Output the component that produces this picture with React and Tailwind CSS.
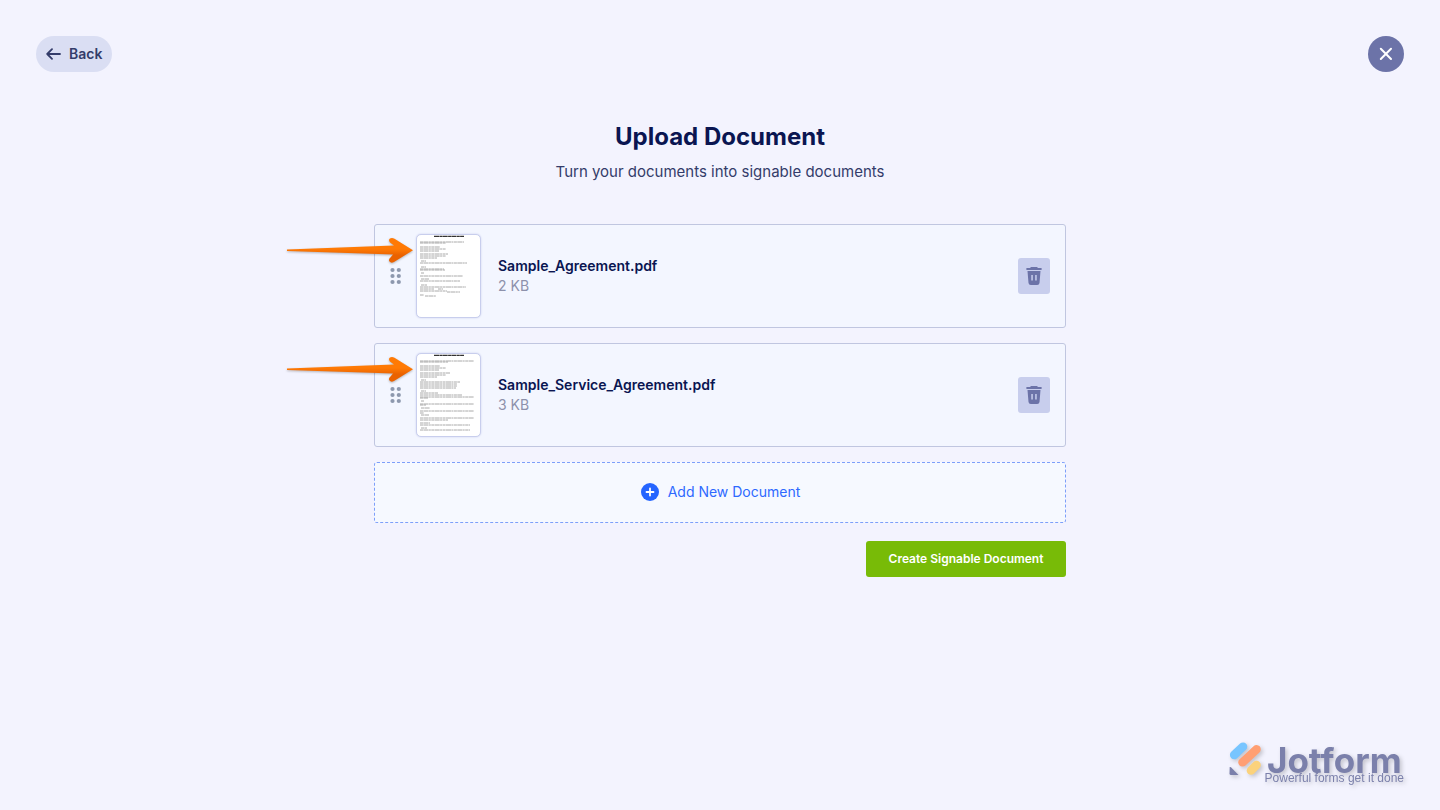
const documents = [
  {
    name: "Sample_Agreement.pdf",
    size: "2 KB",
    // [y, x start, x end] of each printed line
    lines: [
      [7, 4, 48], [8, 4, 30], [12, 4, 24], [14, 4, 30], [16, 4, 23],
      [19, 4, 32], [21, 4, 30], [23, 4, 21], [26, 5, 10], [28, 4, 51],
      [32, 5, 10], [34, 4, 28], [35, 4, 29], [38, 5, 8], [41, 4, 47],
      [44, 5, 13], [46, 4, 44], [50, 5, 11], [52, 4, 50], [54, 4, 18],
      [54, 22, 27], [56, 4, 31], [57, 31, 44], [60, 4, 8], [61, 9, 20],
    ],
  },
  {
    name: "Sample_Service_Agreement.pdf",
    size: "3 KB",
    lines: [
      [7, 4, 58], [8, 4, 32], [12, 4, 24], [14, 4, 30], [16, 4, 23],
      [19, 4, 34], [21, 4, 30], [23, 4, 21], [26, 5, 10], [28, 4, 44],
      [30, 4, 41], [32, 4, 41], [34, 4, 40], [37, 5, 10], [39, 4, 22],
      [41, 4, 46], [43, 4, 58], [44, 4, 12], [47, 5, 8], [50, 4, 58],
      [51, 4, 10], [54, 5, 14], [57, 4, 58], [59, 4, 8], [61, 5, 13],
      [64, 4, 58], [66, 4, 32], [69, 4, 14], [71, 4, 54], [74, 5, 11],
      [76, 4, 54],
    ],
  },
];

export default function App() {
  return (
    <div className="min-h-screen flex flex-col bg-[#f3f3fe] font-['Inter',sans-serif] text-[#0a1551]">
      {/* Header */}
      <header className="flex items-center justify-between px-9 pt-9">
        <button className="flex h-9 items-center gap-2 rounded-full bg-[#dadef3] px-2.5 text-sm font-semibold text-[#343c6a]">
          <BackIcon />
          Back
        </button>
        <button
          aria-label="Close"
          className="flex h-9 w-9 items-center justify-center rounded-full bg-[#6c73a8]"
        >
          <svg width="14" height="14" viewBox="0 0 14 14" fill="none" stroke="#fff" strokeWidth="2" strokeLinecap="round">
            <path d="M1.8 1.8 12 12M12 1.8 1.8 12" />
          </svg>
        </button>
      </header>

      {/* Body */}
      <main className="mx-auto w-full max-w-[692px] flex-1 pt-[49px]">
        <h1 className="text-center text-2xl leading-8 font-bold">Upload Document</h1>
        <p className="mt-[7px] text-center text-[15px] leading-6 text-[#343c6a]">
          Turn your documents into signable documents
        </p>

        <ul className="mt-10 flex flex-col gap-[15px]">
          {documents.map((doc) => (
            <DocumentRow key={doc.name} doc={doc} />
          ))}
        </ul>

        <button className="mt-[15px] flex h-[61px] w-full items-center justify-center gap-2 rounded-[3px] border border-dashed border-[#7d9ffa] bg-[#f6f9ff] pb-px text-sm text-[#2e69ff]">
          <svg width="20" height="20" viewBox="0 0 20 20">
            <circle cx="10" cy="10" r="9" fill="#2565ff" />
            <path d="M10 6.5v7M6.5 10h7" stroke="#fff" strokeWidth="1.8" strokeLinecap="round" />
          </svg>
          Add New Document
        </button>

        <div className="mt-[18px] flex justify-end">
          <button className="h-9 w-[200px] rounded-[3px] bg-[#78bb07] text-xs font-semibold text-white">
            Create Signable Document
          </button>
        </div>
      </main>

      {/* Footer */}
      <footer className="flex justify-end px-9 pb-[26px]">
        <Logo />
      </footer>
    </div>
  );
}

function DocumentRow({ doc }) {
  return (
    <li className="relative flex h-[104px] items-center rounded-[3px] border border-[#c0c6e0] bg-[#f3f6ff] px-[15px]">
      <svg width="12" height="18" viewBox="0 0 12 18" fill="#8d98ae" className="shrink-0">
        {[3, 9, 15].map((y) => (
          <g key={y}>
            <circle cx="2.5" cy={y} r="2.1" />
            <circle cx="8.8" cy={y} r="2.1" />
          </g>
        ))}
      </svg>
      <Thumbnail lines={doc.lines} />
      <div className="ml-[17px] flex-1">
        <div className="text-sm leading-5 font-semibold">{doc.name}</div>
        <div className="text-sm leading-5 text-[#8d91ab]">{doc.size}</div>
      </div>
      <button
        aria-label={`Delete ${doc.name}`}
        className="flex h-9 w-8 items-center justify-center rounded-[3px] bg-[#c8ceed]"
      >
        <TrashIcon />
      </button>
      <Arrow />
    </li>
  );
}

function Thumbnail({ lines }) {
  return (
    <div className="ml-3.5 h-[84px] w-[65px] shrink-0 overflow-hidden rounded-[5px] border border-[#c8ceed] bg-white shadow-[0_0_2px_#c8ceed]">
      <svg width="63" height="82" viewBox="0 0 63 82">
        <path d="M17 1.4H47" stroke="#333" strokeWidth="1.3" strokeDasharray="5 .4 3 .3" />
        {lines.map(([y, from, to]) => (
          <path
            key={`${y}-${from}`}
            d={`M${from - 1} ${y}H${to - 1}`}
            stroke="#aaa"
            strokeWidth="1"
            strokeDasharray="3 .4 5 .4 2 .5"
          />
        ))}
      </svg>
    </div>
  );
}

function Arrow() {
  return (
    <svg
      width="128"
      height="30"
      viewBox="0 0 128 30"
      className="absolute top-3 -left-[89px] drop-shadow-[0_1px_1px_#0004]"
    >
      <defs>
        <linearGradient id="arrow" x1="0" y1="0" x2="0" y2="1">
          <stop offset=".45" stopColor="#ff7a05" />
          <stop offset=".7" stopColor="#ea6200" />
        </linearGradient>
      </defs>
      <path
        d="M1 12.5 108 8.5 104 5.5Q102 3 104 1.5 106 .2 108.5 1.8L127 13.2 108 25Q105 26.5 103.5 24.5 102 22.5 104.5 20.5L107 17.5 1 14Z"
        fill="url(#arrow)"
      />
    </svg>
  );
}

function BackIcon() {
  return (
    <svg width="15" height="12" viewBox="0 0 15 12" fill="none" stroke="#343c6a" strokeWidth="1.8" strokeLinecap="round" strokeLinejoin="round">
      <path d="M14 6H1.2M6 1.2 1.2 6 6 10.8" />
    </svg>
  );
}

function TrashIcon() {
  return (
    <svg width="16" height="20" viewBox="0 0 16 20" fill="#6c73a8">
      <path d="M5 1h6l1 1h3q.8 0 .8.9T15 4H1Q.2 4 .2 3T1 2h3Z" />
      <path
        fillRule="evenodd"
        d="M1.5 5h13l-1 12q-.3 2-2.3 2H4.8q-2 0-2.3-2ZM5.3 9v5.5h1.5V9ZM9.2 9v5.5h1.5V9Z"
      />
    </svg>
  );
}

function Logo() {
  return (
    <div className="flex gap-0.5 text-[#7b80ab] drop-shadow-[2px_2px_2px_#0003]">
      <svg width="34" height="36" viewBox="0 0 34 36" fill="none" strokeWidth="8.6" strokeLinecap="round">
        <path d="M5.2 13 14 4.7" stroke="#78c5ff" />
        <path d="M13.5 20.3 27.5 7.3" stroke="#ff9f73" />
        <path d="M22 28.5 27.5 23" stroke="#fbd27c" />
        <path d="M.7 25.5q.3-1 1.3-.3L9.5 33H2q-1.5 0-1.5-1.5Z" fill="#7b80ab" />
      </svg>
      <div className="pt-1.5 text-center">
        <div className="text-[35px] leading-6 font-bold">Jotform</div>
        <div className="font-['Liberation_Sans',sans-serif] text-xs leading-3">
          Powerful forms get it done
        </div>
      </div>
    </div>
  );
}
